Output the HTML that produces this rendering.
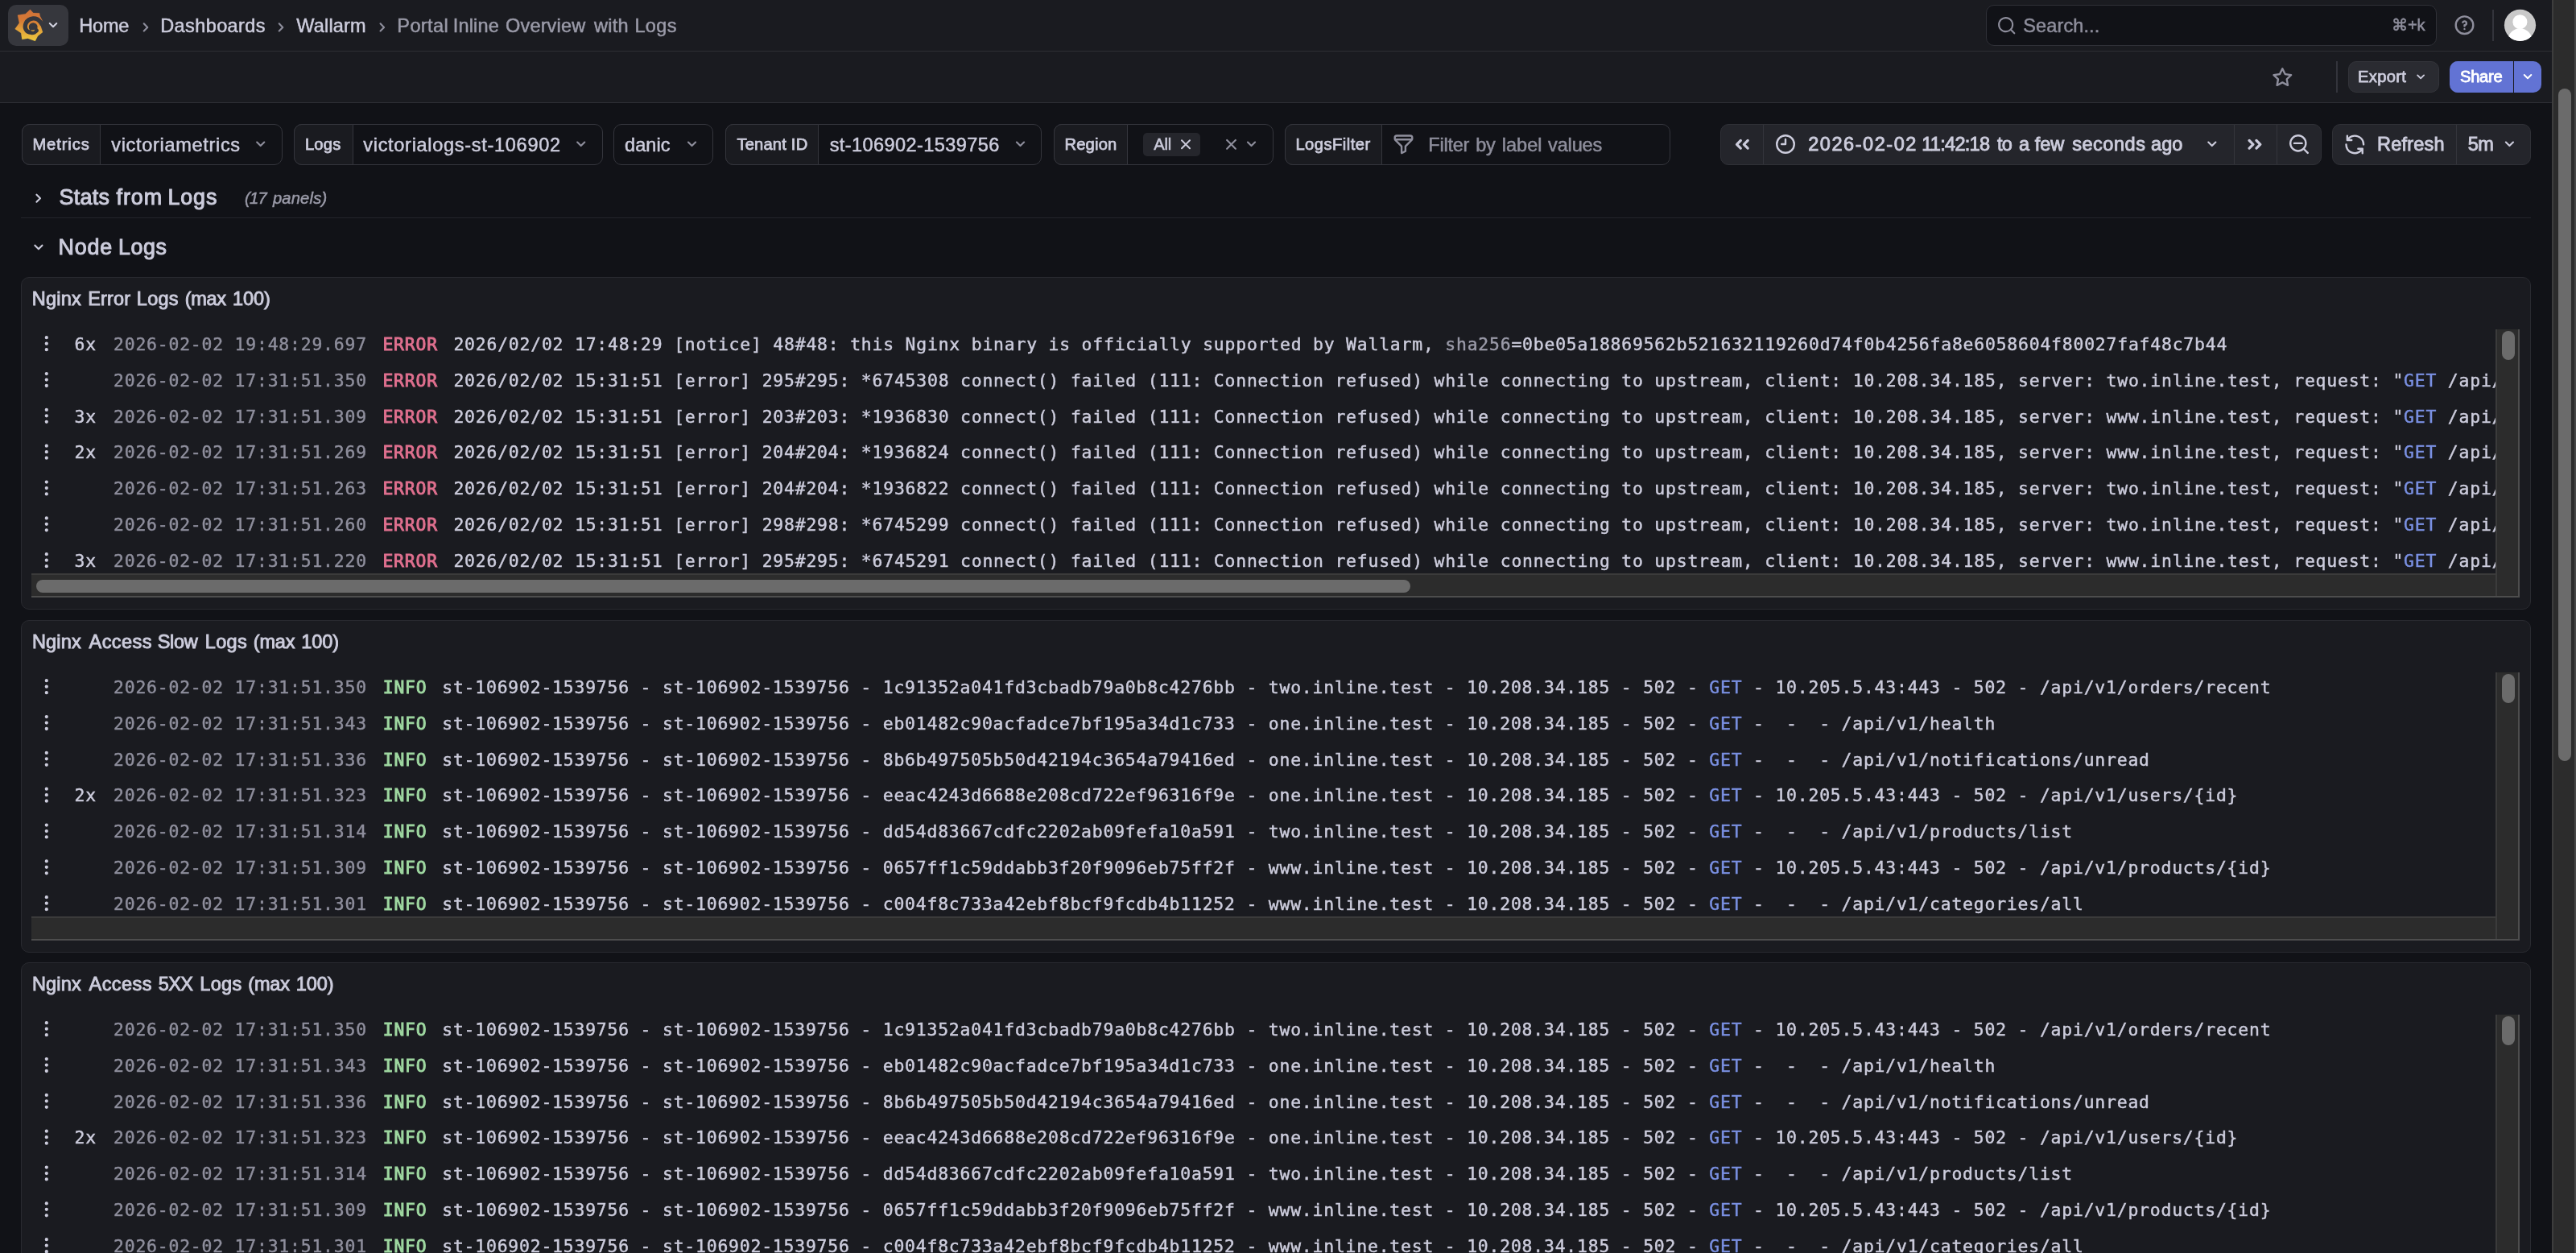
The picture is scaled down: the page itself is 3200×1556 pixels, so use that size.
<!DOCTYPE html>
<html lang="en"><head><meta charset="utf-8"><title>Portal Inline Overview with Logs - Dashboards - Grafana</title>
<style>
html,body{margin:0;padding:0;}
@media (max-width:1700px){html{zoom:.5;}}
body{width:3200px;height:1556px;overflow:hidden;background:#111217;position:relative;font-family:"Liberation Sans", "DejaVu Sans", sans-serif;color:#ccccdc;}
.b{position:absolute;box-sizing:border-box;}
#tx{position:absolute;left:0;top:0;width:3200px;height:1556px;will-change:transform;}
.t{position:absolute;white-space:pre;}
.m{font-family:"DejaVu Sans Mono", "Liberation Mono", monospace;}
svg{position:absolute;overflow:visible;}
</style></head>
<body>
<div class="b" style="left:0px;top:0px;width:3170px;height:128px;background:#1a1b20;"></div>
<div class="b" style="left:0px;top:63px;width:3170px;height:1px;background:#2e2f35;"></div>
<div class="b" style="left:0px;top:127px;width:3170px;height:1px;background:#2e2f35;"></div>
<div class="b" style="left:10px;top:6px;width:75px;height:51px;background:#36373d;border-radius:10px;"></div>
<div class="b" style="left:2467px;top:6px;width:560px;height:51px;background:#111217;border:1.6px solid #2f3037;border-radius:10px;"></div>
<div class="b" style="left:3096px;top:12px;width:2px;height:39px;background:#33343b;"></div>
<div class="b" style="left:2902px;top:76px;width:2px;height:39px;background:#33343b;"></div>
<div class="b" style="left:2917px;top:76px;width:113px;height:39px;background:#2a2b31;border:1px solid #33343a;border-radius:10px;"></div>
<div class="b" style="left:3043px;top:76px;width:114px;height:39px;background:#6273d4;border-radius:10px;"></div>
<div class="b" style="left:3122px;top:76px;width:1px;height:39px;background:#1a1b20;"></div>
<div class="b" style="left:3170px;top:0px;width:30px;height:1556px;background:#2c2c2c;border-left:2px solid #3d3d3d;border-right:2px solid #474747;"></div>
<div class="b" style="left:3178px;top:110px;width:16px;height:835px;background:#6b6b6b;border-radius:8px;"></div>
<div class="b" style="left:27px;top:154px;width:324px;height:51px;background:#111217;border:1.6px solid #34353c;border-radius:10px;"></div>
<div class="b" style="left:27px;top:154px;width:98.3px;height:51px;background:#1a1b20;border:1.6px solid #34353c;border-radius:10px 0 0 10px;"></div>
<div class="b" style="left:365px;top:154px;width:383.6px;height:51px;background:#111217;border:1.6px solid #34353c;border-radius:10px;"></div>
<div class="b" style="left:365px;top:154px;width:73.49999999999999px;height:51px;background:#1a1b20;border:1.6px solid #34353c;border-radius:10px 0 0 10px;"></div>
<div class="b" style="left:762px;top:154px;width:124px;height:51px;background:#111217;border:1.6px solid #34353c;border-radius:10px;"></div>
<div class="b" style="left:901px;top:154px;width:393px;height:51px;background:#111217;border:1.6px solid #34353c;border-radius:10px;"></div>
<div class="b" style="left:901px;top:154px;width:116.3px;height:51px;background:#1a1b20;border:1.6px solid #34353c;border-radius:10px 0 0 10px;"></div>
<div class="b" style="left:1309px;top:154px;width:273px;height:51px;background:#111217;border:1.6px solid #34353c;border-radius:10px;"></div>
<div class="b" style="left:1309px;top:154px;width:91.50000000000004px;height:51px;background:#1a1b20;border:1.6px solid #34353c;border-radius:10px 0 0 10px;"></div>
<div class="b" style="left:1420px;top:165px;width:71px;height:29px;background:#25262c;border-radius:5px;"></div>
<div class="b" style="left:1596px;top:154px;width:478.5999999999999px;height:51px;background:#111217;border:1.6px solid #34353c;border-radius:10px;"></div>
<div class="b" style="left:1596px;top:154px;width:121.20000000000009px;height:51px;background:#1a1b20;border:1.6px solid #34353c;border-radius:10px 0 0 10px;"></div>
<div class="b" style="left:2137px;top:154px;width:747px;height:51px;background:#24252b;border:1px solid #2f3036;border-radius:10px;"></div>
<div class="b" style="left:2189.5px;top:155px;width:1.5px;height:49px;background:#34353c;"></div>
<div class="b" style="left:2774.5px;top:155px;width:1.5px;height:49px;background:#34353c;"></div>
<div class="b" style="left:2827.7px;top:155px;width:1.5px;height:49px;background:#34353c;"></div>
<div class="b" style="left:2897px;top:154px;width:247px;height:51px;background:#24252b;border:1px solid #2f3036;border-radius:10px;"></div>
<div class="b" style="left:3050.5px;top:155px;width:1.5px;height:49px;background:#34353c;"></div>
<div class="b" style="left:26px;top:270px;width:3118px;height:1px;background:#24252b;"></div>
<div class="b" style="left:26px;top:344px;width:3118px;height:413px;background:#1a1b20;border:1.6px solid #292a30;border-radius:10px;"></div>
<div class="b" style="left:39px;top:712px;width:3091px;height:30px;background:#2c2c2c;border-top:2px solid #3b3b3b;border-bottom:2px solid #4d4d4d;"></div>
<div class="b" style="left:45px;top:720px;width:1706.5px;height:16px;background:#6b6b6b;border-radius:8px;"></div>
<div class="b" style="left:3100px;top:409px;width:30px;height:331px;background:#2c2c2c;border-left:2px solid #3b3b3b;border-right:2px solid #4d4d4d;"></div>
<div class="b" style="left:3108px;top:411px;width:16px;height:36px;background:#6b6b6b;border-radius:8px;"></div>
<div class="b" style="left:26px;top:770px;width:3118px;height:413px;background:#1a1b20;border:1.6px solid #292a30;border-radius:10px;"></div>
<div class="b" style="left:39px;top:1138px;width:3091px;height:30px;background:#2c2c2c;border-top:2px solid #3b3b3b;border-bottom:2px solid #4d4d4d;"></div>
<div class="b" style="left:3100px;top:835px;width:30px;height:331px;background:#2c2c2c;border-left:2px solid #3b3b3b;border-right:2px solid #4d4d4d;"></div>
<div class="b" style="left:3108px;top:837px;width:16px;height:36px;background:#6b6b6b;border-radius:8px;"></div>
<div class="b" style="left:26px;top:1195px;width:3118px;height:413px;background:#1a1b20;border:1.6px solid #292a30;border-radius:10px;"></div>
<div class="b" style="left:39px;top:1563px;width:3091px;height:30px;background:#2c2c2c;border-top:2px solid #3b3b3b;border-bottom:2px solid #4d4d4d;"></div>
<div class="b" style="left:3100px;top:1260px;width:30px;height:331px;background:#2c2c2c;border-left:2px solid #3b3b3b;border-right:2px solid #4d4d4d;"></div>
<div class="b" style="left:3108px;top:1262px;width:16px;height:36px;background:#6b6b6b;border-radius:8px;"></div>
<svg width="3200" height="1556" viewBox="0 0 3200 1556" style="left:0;top:0"><path transform="translate(54.00 19.10) scale(1.0000)" fill="#d4d4e2" d="M17,9.17a1,1,0,0,0-1.41,0L12,12.71,8.46,9.17a1,1,0,0,0-1.41,0,1,1,0,0,0,0,1.42l4.24,4.24a1,1,0,0,0,1.42,0L17,10.59A1,1,0,0,0,17,9.17Z"/><path transform="translate(168.20 21.10) scale(1.0667)" fill="#8e8e9c" d="M14.83,11.29,10.59,7.05a1,1,0,0,0-1.42,0,1,1,0,0,0,0,1.41L12.71,12,9.17,15.54a1,1,0,0,0,0,1.41,1,1,0,0,0,.71.29,1,1,0,0,0,.71-.29l4.24-4.24A1,1,0,0,0,14.83,11.29Z"/><path transform="translate(336.20 21.10) scale(1.0667)" fill="#8e8e9c" d="M14.83,11.29,10.59,7.05a1,1,0,0,0-1.42,0,1,1,0,0,0,0,1.41L12.71,12,9.17,15.54a1,1,0,0,0,0,1.41,1,1,0,0,0,.71.29,1,1,0,0,0,.71-.29l4.24-4.24A1,1,0,0,0,14.83,11.29Z"/><path transform="translate(462.00 21.10) scale(1.0667)" fill="#8e8e9c" d="M14.83,11.29,10.59,7.05a1,1,0,0,0-1.42,0,1,1,0,0,0,0,1.41L12.71,12,9.17,15.54a1,1,0,0,0,0,1.41,1,1,0,0,0,.71.29,1,1,0,0,0,.71-.29l4.24-4.24A1,1,0,0,0,14.83,11.29Z"/><path transform="translate(2479.90 18.90) scale(1.0667)" fill="#8e8e9c" d="M21.71,20.29,18,16.61A9,9,0,1,0,16.61,18l3.68,3.68a1,1,0,0,0,1.42,0A1,1,0,0,0,21.71,20.29ZM11,18a7,7,0,1,1,7-7A7,7,0,0,1,11,18Z"/><path transform="translate(3047.10 16.80) scale(1.2000)" fill="#8e8e9c" d="M11.29,15.29a1.58,1.58,0,0,0-.12.15.76.76,0,0,0-.09.18.64.64,0,0,0-.06.18,1.36,1.36,0,0,0,0,.2.84.84,0,0,0,.08.38.9.9,0,0,0,.54.54.94.94,0,0,0,.76,0,.9.9,0,0,0,.54-.54A1,1,0,0,0,13,16a1,1,0,0,0-.29-.71A1,1,0,0,0,11.29,15.29ZM12,2A10,10,0,1,0,22,12,10,10,0,0,0,12,2Zm0,18a8,8,0,1,1,8-8A8,8,0,0,1,12,20ZM12,7A3,3,0,0,0,9.4,8.5a1,1,0,1,0,1.73,1A1,1,0,0,1,12,9a1,1,0,0,1,0,2,1,1,0,0,0-1,1v1a1,1,0,0,0,2,0v-.18A3,3,0,0,0,12,7Z"/><clipPath id="av"><circle cx="3130.5" cy="31.3" r="19.6"/></clipPath><circle cx="3130.5" cy="31.3" r="19.6" fill="#c9c9c9"/><g clip-path="url(#av)" fill="#fff"><circle cx="3130.4" cy="27.2" r="9"/><ellipse cx="3130.4" cy="52" rx="15.5" ry="16.8"/></g><path transform="translate(2820.90 81.20) scale(1.2000)" fill="#8e8e9c" d="M22,9.67A1,1,0,0,0,21.14,9l-5.69-.83L12.9,3a1,1,0,0,0-1.8,0L8.55,8.16,2.86,9a1,1,0,0,0-.81.68,1,1,0,0,0,.25,1l4.13,4-1,5.68A1,1,0,0,0,6.9,21.44L12,18.77l5.1,2.67a.93.93,0,0,0,.46.12,1,1,0,0,0,.59-.19,1,1,0,0,0,.4-1l-1-5.68,4.13-4A1,1,0,0,0,22,9.67Zm-6.15,4a1,1,0,0,0-.29.88l.72,4.2-3.76-2a1.06,1.06,0,0,0-.94,0l-3.76,2,.72-4.2a1,1,0,0,0-.29-.88l-3-3,4.21-.61a1,1,0,0,0,.76-.55L12,5.7l1.88,3.82a1,1,0,0,0,.76.55l4.21.61Z"/><path transform="translate(2995.90 84.20) scale(0.9333)" fill="#ccccdc" d="M17,9.17a1,1,0,0,0-1.41,0L12,12.71,8.46,9.17a1,1,0,0,0-1.41,0,1,1,0,0,0,0,1.42l4.24,4.24a1,1,0,0,0,1.42,0L17,10.59A1,1,0,0,0,17,9.17Z"/><path transform="translate(3128.00 83.10) scale(1.0000)" fill="#ffffff" d="M17,9.17a1,1,0,0,0-1.41,0L12,12.71,8.46,9.17a1,1,0,0,0-1.41,0,1,1,0,0,0,0,1.42l4.24,4.24a1,1,0,0,0,1.42,0L17,10.59A1,1,0,0,0,17,9.17Z"/><path transform="translate(310.90 166.00) scale(1.0667)" fill="#8e8e9c" d="M17,9.17a1,1,0,0,0-1.41,0L12,12.71,8.46,9.17a1,1,0,0,0-1.41,0,1,1,0,0,0,0,1.42l4.24,4.24a1,1,0,0,0,1.42,0L17,10.59A1,1,0,0,0,17,9.17Z"/><path transform="translate(708.90 166.00) scale(1.0667)" fill="#8e8e9c" d="M17,9.17a1,1,0,0,0-1.41,0L12,12.71,8.46,9.17a1,1,0,0,0-1.41,0,1,1,0,0,0,0,1.42l4.24,4.24a1,1,0,0,0,1.42,0L17,10.59A1,1,0,0,0,17,9.17Z"/><path transform="translate(846.70 166.00) scale(1.0667)" fill="#8e8e9c" d="M17,9.17a1,1,0,0,0-1.41,0L12,12.71,8.46,9.17a1,1,0,0,0-1.41,0,1,1,0,0,0,0,1.42l4.24,4.24a1,1,0,0,0,1.42,0L17,10.59A1,1,0,0,0,17,9.17Z"/><path transform="translate(1254.70 166.00) scale(1.0667)" fill="#8e8e9c" d="M17,9.17a1,1,0,0,0-1.41,0L12,12.71,8.46,9.17a1,1,0,0,0-1.41,0,1,1,0,0,0,0,1.42l4.24,4.24a1,1,0,0,0,1.42,0L17,10.59A1,1,0,0,0,17,9.17Z"/><path transform="translate(1461.00 167.30) scale(1.0000)" fill="#ccccdc" d="M13.41,12l4.3-4.29a1,1,0,1,0-1.42-1.42L12,10.59,7.71,6.29A1,1,0,0,0,6.29,7.71L10.59,12l-4.3,4.29a1,1,0,0,0,0,1.42,1,1,0,0,0,1.42,0L12,13.41l4.29,4.3a1,1,0,0,0,1.42,0,1,1,0,0,0,0-1.42Z"/><path transform="translate(1516.70 166.50) scale(1.0667)" fill="#8e8e9c" d="M13.41,12l4.3-4.29a1,1,0,1,0-1.42-1.42L12,10.59,7.71,6.29A1,1,0,0,0,6.29,7.71L10.59,12l-4.3,4.29a1,1,0,0,0,0,1.42,1,1,0,0,0,1.42,0L12,13.41l4.29,4.3a1,1,0,0,0,1.42,0,1,1,0,0,0,0-1.42Z"/><path transform="translate(1541.70 166.00) scale(1.0667)" fill="#8e8e9c" d="M17,9.17a1,1,0,0,0-1.41,0L12,12.71,8.46,9.17a1,1,0,0,0-1.41,0,1,1,0,0,0,0,1.42l4.24,4.24a1,1,0,0,0,1.42,0L17,10.59A1,1,0,0,0,17,9.17Z"/><path transform="translate(1729.10 164.90) scale(1.2000)" fill="#8e8e9c" d="M19,2H5A3,3,0,0,0,2,5V6.17a3,3,0,0,0,.25,1.2l0,.06a2.81,2.81,0,0,0,.59.86L9,14.41V21a1,1,0,0,0,.47.85A1,1,0,0,0,10,22a1,1,0,0,0,.45-.11l4-2A1,1,0,0,0,15,19V14.41l6.12-6.12a2.81,2.81,0,0,0,.59-.86l0-.06A3,3,0,0,0,22,6.17V5A3,3,0,0,0,19,2ZM13.29,13.29A1,1,0,0,0,13,14v4.38l-2,1V14a1,1,0,0,0-.29-.71L5.41,8H18.59ZM20,6H4V5A1,1,0,0,1,5,4H19a1,1,0,0,1,1,1Z"/><path transform="translate(2145.10 160.10) scale(1.6000)" fill="#ccccdc" d="M11.46,8.29a1,1,0,0,0-1.42,0l-3,3a1,1,0,0,0,0,1.42l3,3a1,1,0,0,0,1.42,0,1,1,0,0,0,0-1.42L9.16,12l2.3-2.29A1,1,0,0,0,11.46,8.29Zm3.2,3.71L17,9.71a1,1,0,0,0-1.42-1.42l-3,3a1,1,0,0,0,0,1.42l3,3a1,1,0,0,0,1.42,0,1,1,0,0,0,0-1.42Z"/><path transform="translate(2781.80 160.10) scale(1.6000)" fill="#ccccdc" d="M8.46,8.29A1,1,0,1,0,7,9.71L9.34,12,7,14.29a1,1,0,0,0,0,1.42,1,1,0,0,0,1.42,0l3-3a1,1,0,0,0,0-1.42Zm8.5,3-3-3a1,1,0,0,0-1.42,1.42L14.84,12l-2.3,2.29a1,1,0,0,0,0,1.42,1,1,0,0,0,1.42,0l3-3A1,1,0,0,0,16.96,11.29Z"/><path transform="translate(2203.60 164.60) scale(1.2000)" fill="#ccccdc" d="M12,2A10,10,0,1,0,22,12,10.01114,10.01114,0,0,0,12,2Zm0,18a8,8,0,1,1,8-8A8.00917,8.00917,0,0,1,12,20ZM12,6a.99974.99974,0,0,0-1,1v4H8a1,1,0,0,0,0,2h4a.99974.99974,0,0,0,1-1V7A.99974.99974,0,0,0,12,6Z"/><path transform="translate(2735.00 166.00) scale(1.0667)" fill="#ccccdc" d="M17,9.17a1,1,0,0,0-1.41,0L12,12.71,8.46,9.17a1,1,0,0,0-1.41,0,1,1,0,0,0,0,1.42l4.24,4.24a1,1,0,0,0,1.42,0L17,10.59A1,1,0,0,0,17,9.17Z"/><path transform="translate(2841.60 164.70) scale(1.2000)" fill="#ccccdc" d="M21.71,20.29,18,16.61A9,9,0,1,0,16.61,18l3.68,3.68a1,1,0,0,0,1.42,0A1,1,0,0,0,21.71,20.29ZM11,18a7,7,0,1,1,7-7A7,7,0,0,1,11,18ZM15,10H7a1,1,0,0,0,0,2h8a1,1,0,0,0,0-2Z"/><path transform="translate(2910.90 165.00) scale(1.2000)" fill="#ccccdc" d="M19.91,15.51H15.38a1,1,0,0,0,0,2h2.4A8,8,0,0,1,4,12a1,1,0,0,0-2,0,10,10,0,0,0,16.88,7.23V21a1,1,0,0,0,2,0V16.5A1,1,0,0,0,19.91,15.51ZM12,2A10,10,0,0,0,5.12,4.77V3a1,1,0,0,0-2,0V7.5a1,1,0,0,0,1,1h4.5a1,1,0,0,0,0-2H6.22A8,8,0,0,1,20,12a1,1,0,0,0,2,0A10,10,0,0,0,12,2Z"/><path transform="translate(3104.60 166.00) scale(1.0667)" fill="#ccccdc" d="M17,9.17a1,1,0,0,0-1.41,0L12,12.71,8.46,9.17a1,1,0,0,0-1.41,0,1,1,0,0,0,0,1.42l4.24,4.24a1,1,0,0,0,1.42,0L17,10.59A1,1,0,0,0,17,9.17Z"/><path transform="translate(34.90 233.40) scale(1.0667)" fill="#ccccdc" d="M14.83,11.29,10.59,7.05a1,1,0,0,0-1.42,0,1,1,0,0,0,0,1.41L12.71,12,9.17,15.54a1,1,0,0,0,0,1.41,1,1,0,0,0,.71.29,1,1,0,0,0,.71-.29l4.24-4.24A1,1,0,0,0,14.83,11.29Z"/><path transform="translate(35.10 294.20) scale(1.0667)" fill="#ccccdc" d="M17,9.17a1,1,0,0,0-1.41,0L12,12.71,8.46,9.17a1,1,0,0,0-1.41,0,1,1,0,0,0,0,1.42l4.24,4.24a1,1,0,0,0,1.42,0L17,10.59A1,1,0,0,0,17,9.17Z"/><path transform="translate(45.00 413.90) scale(1.0667)" fill="#ccccdc" d="M12,7a2,2,0,1,0-2-2A2,2,0,0,0,12,7Zm0,10a2,2,0,1,0,2,2A2,2,0,0,0,12,17Zm0-7a2,2,0,1,0,2,2A2,2,0,0,0,12,10Z"/><path transform="translate(45.00 458.73) scale(1.0667)" fill="#ccccdc" d="M12,7a2,2,0,1,0-2-2A2,2,0,0,0,12,7Zm0,10a2,2,0,1,0,2,2A2,2,0,0,0,12,17Zm0-7a2,2,0,1,0,2,2A2,2,0,0,0,12,10Z"/><path transform="translate(45.00 503.56) scale(1.0667)" fill="#ccccdc" d="M12,7a2,2,0,1,0-2-2A2,2,0,0,0,12,7Zm0,10a2,2,0,1,0,2,2A2,2,0,0,0,12,17Zm0-7a2,2,0,1,0,2,2A2,2,0,0,0,12,10Z"/><path transform="translate(45.00 548.39) scale(1.0667)" fill="#ccccdc" d="M12,7a2,2,0,1,0-2-2A2,2,0,0,0,12,7Zm0,10a2,2,0,1,0,2,2A2,2,0,0,0,12,17Zm0-7a2,2,0,1,0,2,2A2,2,0,0,0,12,10Z"/><path transform="translate(45.00 593.22) scale(1.0667)" fill="#ccccdc" d="M12,7a2,2,0,1,0-2-2A2,2,0,0,0,12,7Zm0,10a2,2,0,1,0,2,2A2,2,0,0,0,12,17Zm0-7a2,2,0,1,0,2,2A2,2,0,0,0,12,10Z"/><path transform="translate(45.00 638.05) scale(1.0667)" fill="#ccccdc" d="M12,7a2,2,0,1,0-2-2A2,2,0,0,0,12,7Zm0,10a2,2,0,1,0,2,2A2,2,0,0,0,12,17Zm0-7a2,2,0,1,0,2,2A2,2,0,0,0,12,10Z"/><path transform="translate(45.00 682.88) scale(1.0667)" fill="#ccccdc" d="M12,7a2,2,0,1,0-2-2A2,2,0,0,0,12,7Zm0,10a2,2,0,1,0,2,2A2,2,0,0,0,12,17Zm0-7a2,2,0,1,0,2,2A2,2,0,0,0,12,10Z"/><path transform="translate(45.00 839.90) scale(1.0667)" fill="#ccccdc" d="M12,7a2,2,0,1,0-2-2A2,2,0,0,0,12,7Zm0,10a2,2,0,1,0,2,2A2,2,0,0,0,12,17Zm0-7a2,2,0,1,0,2,2A2,2,0,0,0,12,10Z"/><path transform="translate(45.00 884.73) scale(1.0667)" fill="#ccccdc" d="M12,7a2,2,0,1,0-2-2A2,2,0,0,0,12,7Zm0,10a2,2,0,1,0,2,2A2,2,0,0,0,12,17Zm0-7a2,2,0,1,0,2,2A2,2,0,0,0,12,10Z"/><path transform="translate(45.00 929.56) scale(1.0667)" fill="#ccccdc" d="M12,7a2,2,0,1,0-2-2A2,2,0,0,0,12,7Zm0,10a2,2,0,1,0,2,2A2,2,0,0,0,12,17Zm0-7a2,2,0,1,0,2,2A2,2,0,0,0,12,10Z"/><path transform="translate(45.00 974.39) scale(1.0667)" fill="#ccccdc" d="M12,7a2,2,0,1,0-2-2A2,2,0,0,0,12,7Zm0,10a2,2,0,1,0,2,2A2,2,0,0,0,12,17Zm0-7a2,2,0,1,0,2,2A2,2,0,0,0,12,10Z"/><path transform="translate(45.00 1019.22) scale(1.0667)" fill="#ccccdc" d="M12,7a2,2,0,1,0-2-2A2,2,0,0,0,12,7Zm0,10a2,2,0,1,0,2,2A2,2,0,0,0,12,17Zm0-7a2,2,0,1,0,2,2A2,2,0,0,0,12,10Z"/><path transform="translate(45.00 1064.05) scale(1.0667)" fill="#ccccdc" d="M12,7a2,2,0,1,0-2-2A2,2,0,0,0,12,7Zm0,10a2,2,0,1,0,2,2A2,2,0,0,0,12,17Zm0-7a2,2,0,1,0,2,2A2,2,0,0,0,12,10Z"/><path transform="translate(45.00 1108.88) scale(1.0667)" fill="#ccccdc" d="M12,7a2,2,0,1,0-2-2A2,2,0,0,0,12,7Zm0,10a2,2,0,1,0,2,2A2,2,0,0,0,12,17Zm0-7a2,2,0,1,0,2,2A2,2,0,0,0,12,10Z"/><path transform="translate(45.00 1264.90) scale(1.0667)" fill="#ccccdc" d="M12,7a2,2,0,1,0-2-2A2,2,0,0,0,12,7Zm0,10a2,2,0,1,0,2,2A2,2,0,0,0,12,17Zm0-7a2,2,0,1,0,2,2A2,2,0,0,0,12,10Z"/><path transform="translate(45.00 1309.73) scale(1.0667)" fill="#ccccdc" d="M12,7a2,2,0,1,0-2-2A2,2,0,0,0,12,7Zm0,10a2,2,0,1,0,2,2A2,2,0,0,0,12,17Zm0-7a2,2,0,1,0,2,2A2,2,0,0,0,12,10Z"/><path transform="translate(45.00 1354.56) scale(1.0667)" fill="#ccccdc" d="M12,7a2,2,0,1,0-2-2A2,2,0,0,0,12,7Zm0,10a2,2,0,1,0,2,2A2,2,0,0,0,12,17Zm0-7a2,2,0,1,0,2,2A2,2,0,0,0,12,10Z"/><path transform="translate(45.00 1399.39) scale(1.0667)" fill="#ccccdc" d="M12,7a2,2,0,1,0-2-2A2,2,0,0,0,12,7Zm0,10a2,2,0,1,0,2,2A2,2,0,0,0,12,17Zm0-7a2,2,0,1,0,2,2A2,2,0,0,0,12,10Z"/><path transform="translate(45.00 1444.22) scale(1.0667)" fill="#ccccdc" d="M12,7a2,2,0,1,0-2-2A2,2,0,0,0,12,7Zm0,10a2,2,0,1,0,2,2A2,2,0,0,0,12,17Zm0-7a2,2,0,1,0,2,2A2,2,0,0,0,12,10Z"/><path transform="translate(45.00 1489.05) scale(1.0667)" fill="#ccccdc" d="M12,7a2,2,0,1,0-2-2A2,2,0,0,0,12,7Zm0,10a2,2,0,1,0,2,2A2,2,0,0,0,12,17Zm0-7a2,2,0,1,0,2,2A2,2,0,0,0,12,10Z"/><path transform="translate(45.00 1533.88) scale(1.0667)" fill="#ccccdc" d="M12,7a2,2,0,1,0-2-2A2,2,0,0,0,12,7Zm0,10a2,2,0,1,0,2,2A2,2,0,0,0,12,17Zm0-7a2,2,0,1,0,2,2A2,2,0,0,0,12,10Z"/><defs><linearGradient id="gg" gradientUnits="userSpaceOnUse" x1="0" y1="12" x2="0" y2="51"><stop offset="0" stop-color="#cf7139"/><stop offset="0.35" stop-color="#d67a35"/><stop offset="0.62" stop-color="#e19f3a"/><stop offset="1" stop-color="#ecc83d"/></linearGradient></defs><polygon points="37.49,11.85 41.34,16.00 49.05,16.26 49.78,20.11 52.17,24.51 53.63,30.02 51.98,30.39 50.88,33.32 53.08,39.93 47.03,44.70 43.72,50.94 34.55,47.63 27.39,48.92 26.11,41.03 18.59,35.89 23.91,28.55 21.89,18.83 31.61,17.17" fill="url(#gg)" stroke="url(#gg)" stroke-width="0.2" stroke-linejoin="round"/><circle cx="41.2" cy="33.6" r="5.4" fill="#36373d"/><path d="M45.19 37.91C44.76 38.24 43.66 39.50 42.62 39.93C41.58 40.35 40.30 40.60 38.95 40.48C37.61 40.35 35.71 39.90 34.55 39.19C33.39 38.49 32.53 37.30 31.98 36.26C31.43 35.22 31.19 34.24 31.25 32.95C31.31 31.67 31.61 29.93 32.35 28.55C33.08 27.17 34.18 25.65 35.65 24.70C37.12 23.75 39.38 23.02 41.16 22.86C42.93 22.71 44.83 23.08 46.29 23.78C47.76 24.48 48.98 25.98 49.96 27.08C50.94 28.18 51.80 29.83 52.17 30.39" stroke="#36373d" stroke-width="5.3" fill="none" stroke-linecap="round"/><path d="M39.32 37.91C39.63 37.95 40.67 38.23 41.16 38.17C41.65 38.10 42.07 37.65 42.26 37.54" stroke="#e3a63a" stroke-width="1.3" fill="none" stroke-linecap="round"/></svg>
<div id="tx">
<div class="t" style="left:98.25px;top:15.00px;font-size:23.52px;line-height:35px;letter-spacing:-0.216px;-webkit-text-stroke-width:0.5px;">Home</div>
<div class="t" style="left:199.25px;top:15.00px;font-size:23.52px;line-height:35px;letter-spacing:0.384px;-webkit-text-stroke-width:0.5px;">Dashboards</div>
<div class="t" style="left:368.25px;top:15.00px;font-size:23.52px;line-height:35px;letter-spacing:0.174px;-webkit-text-stroke-width:0.5px;">Wallarm</div>
<div class="t" style="left:493.35px;top:15.00px;font-size:23.52px;line-height:35px;color:#9a9aa8;letter-spacing:0.379px;-webkit-text-stroke-width:0.5px;">Portal</div>
<div class="t" style="left:562.65px;top:15.00px;font-size:23.52px;line-height:35px;color:#9a9aa8;letter-spacing:0.212px;-webkit-text-stroke-width:0.5px;">Inline</div>
<div class="t" style="left:628.05px;top:15.00px;font-size:23.52px;line-height:35px;color:#9a9aa8;letter-spacing:0.154px;-webkit-text-stroke-width:0.5px;">Overview</div>
<div class="t" style="left:738.05px;top:15.00px;font-size:23.52px;line-height:35px;color:#9a9aa8;letter-spacing:0.253px;-webkit-text-stroke-width:0.5px;">with</div>
<div class="t" style="left:788.45px;top:15.00px;font-size:23.52px;line-height:35px;color:#9a9aa8;letter-spacing:0.355px;-webkit-text-stroke-width:0.5px;">Logs</div>
<div class="t" style="left:2513.25px;top:15.00px;font-size:23.52px;line-height:35px;color:#8e8e9c;letter-spacing:0.116px;-webkit-text-stroke-width:0.5px;">Search...</div>
<div class="t" style="left:2971.05px;top:16.40px;font-size:20.16px;line-height:30px;color:#8e8e9c;letter-spacing:-0.214px;-webkit-text-stroke-width:0.5px;">⌘+k</div>
<div class="t" style="left:2928.97px;top:79.80px;font-size:20.16px;line-height:30px;letter-spacing:0.339px;-webkit-text-stroke-width:0.75px;">Export</div>
<div class="t" style="left:3056.03px;top:79.90px;font-size:20.16px;line-height:30px;color:#ffffff;letter-spacing:-0.282px;-webkit-text-stroke-width:0.85px;">Share</div>
<div class="t" style="left:40.38px;top:164.20px;font-size:20.16px;line-height:30px;letter-spacing:0.897px;-webkit-text-stroke-width:0.75px;">Metrics</div>
<div class="t" style="left:138.25px;top:162.90px;font-size:23.52px;line-height:35px;letter-spacing:0.686px;-webkit-text-stroke-width:0.5px;">victoriametrics</div>
<div class="t" style="left:378.88px;top:164.20px;font-size:20.16px;line-height:30px;letter-spacing:0.273px;-webkit-text-stroke-width:0.75px;">Logs</div>
<div class="t" style="left:451.25px;top:162.90px;font-size:23.52px;line-height:35px;letter-spacing:0.702px;-webkit-text-stroke-width:0.5px;">victorialogs-st-106902</div>
<div class="t" style="left:776.05px;top:162.90px;font-size:23.52px;line-height:35px;letter-spacing:0.060px;-webkit-text-stroke-width:0.5px;">danic</div>
<div class="t" style="left:915.38px;top:164.20px;font-size:20.16px;line-height:30px;letter-spacing:0.192px;-webkit-text-stroke-width:0.75px;">Tenant ID</div>
<div class="t" style="left:1030.65px;top:162.90px;font-size:23.52px;line-height:35px;letter-spacing:0.413px;-webkit-text-stroke-width:0.5px;">st-106902-1539756</div>
<div class="t" style="left:1322.38px;top:164.20px;font-size:20.16px;line-height:30px;letter-spacing:0.217px;-webkit-text-stroke-width:0.75px;">Region</div>
<div class="t" style="left:1433.25px;top:164.00px;font-size:20.16px;line-height:30px;letter-spacing:-0.211px;-webkit-text-stroke-width:0.5px;">All</div>
<div class="t" style="left:1609.38px;top:164.20px;font-size:20.16px;line-height:30px;letter-spacing:0.474px;-webkit-text-stroke-width:0.75px;">LogsFilter</div>
<div class="t" style="left:1774.35px;top:162.90px;font-size:23.52px;line-height:35px;color:#8e8e9c;letter-spacing:-0.245px;-webkit-text-stroke-width:0.5px;">Filter</div>
<div class="t" style="left:1833.15px;top:162.90px;font-size:23.52px;line-height:35px;color:#8e8e9c;letter-spacing:-0.278px;-webkit-text-stroke-width:0.5px;">by</div>
<div class="t" style="left:1865.75px;top:162.90px;font-size:23.52px;line-height:35px;color:#8e8e9c;letter-spacing:0.010px;-webkit-text-stroke-width:0.5px;">label</div>
<div class="t" style="left:1923.05px;top:162.90px;font-size:23.52px;line-height:35px;color:#8e8e9c;letter-spacing:-0.143px;-webkit-text-stroke-width:0.5px;">values</div>
<div class="t" style="left:2246.15px;top:161.80px;font-size:23.52px;line-height:35px;letter-spacing:1.554px;-webkit-text-stroke-width:0.9px;">2026-02-02</div>
<div class="t" style="left:2387.19px;top:161.80px;font-size:23.52px;line-height:35px;letter-spacing:-0.700px;-webkit-text-stroke-width:0.9px;">11:42:18</div>
<div class="t" style="left:2481.03px;top:161.80px;font-size:23.52px;line-height:35px;letter-spacing:-0.700px;-webkit-text-stroke-width:0.9px;">to</div>
<div class="t" style="left:2507.95px;top:161.80px;font-size:23.52px;line-height:35px;-webkit-text-stroke-width:0.9px;">a</div>
<div class="t" style="left:2527.65px;top:161.80px;font-size:23.52px;line-height:35px;letter-spacing:-0.006px;-webkit-text-stroke-width:0.9px;">few</div>
<div class="t" style="left:2574.15px;top:161.80px;font-size:23.52px;line-height:35px;letter-spacing:0.529px;-webkit-text-stroke-width:0.9px;">seconds</div>
<div class="t" style="left:2672.05px;top:161.80px;font-size:23.52px;line-height:35px;letter-spacing:0.072px;-webkit-text-stroke-width:0.9px;">ago</div>
<div class="t" style="left:2953.05px;top:162.00px;font-size:23.52px;line-height:35px;letter-spacing:0.207px;-webkit-text-stroke-width:0.9px;">Refresh</div>
<div class="t" style="left:3065.81px;top:162.00px;font-size:23.52px;line-height:35px;letter-spacing:-0.700px;-webkit-text-stroke-width:0.9px;">5m</div>
<div class="t" style="left:73.60px;top:224.70px;font-size:26.88px;line-height:40px;letter-spacing:0.249px;-webkit-text-stroke-width:1.0px;">Stats</div>
<div class="t" style="left:144.50px;top:224.70px;font-size:26.88px;line-height:40px;letter-spacing:0.979px;-webkit-text-stroke-width:1.0px;">from</div>
<div class="t" style="left:208.50px;top:224.70px;font-size:26.88px;line-height:40px;letter-spacing:0.853px;-webkit-text-stroke-width:1.0px;">Logs</div>
<div class="t" style="left:303.89px;top:231.00px;font-size:20.16px;line-height:30px;font-style:italic;color:#9a9aa8;letter-spacing:-0.700px;-webkit-text-stroke-width:0.5px;">(17</div>
<div class="t" style="left:338.95px;top:231.00px;font-size:20.16px;line-height:30px;font-style:italic;color:#9a9aa8;letter-spacing:0.184px;-webkit-text-stroke-width:0.5px;">panels)</div>
<div class="t" style="left:72.60px;top:286.80px;font-size:26.88px;line-height:40px;letter-spacing:0.800px;-webkit-text-stroke-width:1.0px;">Node</div>
<div class="t" style="left:147.00px;top:286.80px;font-size:26.88px;line-height:40px;letter-spacing:0.587px;-webkit-text-stroke-width:1.0px;">Logs</div>
<div class="t" style="left:39.65px;top:354.30px;font-size:23.52px;line-height:35px;letter-spacing:0.259px;-webkit-text-stroke-width:0.9px;">Nginx</div>
<div class="t" style="left:109.15px;top:354.30px;font-size:23.52px;line-height:35px;letter-spacing:0.169px;-webkit-text-stroke-width:0.9px;">Error</div>
<div class="t" style="left:169.85px;top:354.30px;font-size:23.52px;line-height:35px;letter-spacing:0.255px;-webkit-text-stroke-width:0.9px;">Logs</div>
<div class="t" style="left:229.85px;top:354.30px;font-size:23.52px;line-height:35px;letter-spacing:-0.333px;-webkit-text-stroke-width:0.9px;">(max</div>
<div class="t" style="left:289.05px;top:354.30px;font-size:23.52px;line-height:35px;letter-spacing:-0.112px;-webkit-text-stroke-width:0.9px;">100)</div>
<div class="t m" style="left:92.62px;top:412.00px;font-size:21.4px;line-height:32px;letter-spacing:0.809px;-webkit-text-stroke-width:0.45px;">6x</div>
<div class="t m" style="left:141.03px;top:412.00px;font-size:21.4px;line-height:32px;color:#8e8e9c;letter-spacing:0.809px;-webkit-text-stroke-width:0.45px;">2026-02-02 19:48:29.697</div>
<div class="t m" style="left:475.45px;top:412.00px;font-size:21.4px;line-height:32px;color:#e0708f;letter-spacing:0.809px;-webkit-text-stroke-width:0.9px;">ERROR</div>
<div class="t m" style="left:563.43px;top:412.00px;font-size:21.4px;line-height:32px;letter-spacing:0.809px;-webkit-text-stroke-width:0.45px;width:2537.0px;overflow:hidden;">2026/02/02 17:48:29 [notice] 48#48: this Nginx binary is officially supported by Wallarm, <span style="color:#9a9aa8">sha256</span>=0be05a18869562b521632119260d74f0b4256fa8e6058604f80027faf48c7b44</div>
<div class="t m" style="left:141.03px;top:456.83px;font-size:21.4px;line-height:32px;color:#8e8e9c;letter-spacing:0.809px;-webkit-text-stroke-width:0.45px;">2026-02-02 17:31:51.350</div>
<div class="t m" style="left:475.45px;top:456.83px;font-size:21.4px;line-height:32px;color:#e0708f;letter-spacing:0.809px;-webkit-text-stroke-width:0.9px;">ERROR</div>
<div class="t m" style="left:563.43px;top:456.83px;font-size:21.4px;line-height:32px;letter-spacing:0.809px;-webkit-text-stroke-width:0.45px;width:2537.0px;overflow:hidden;">2026/02/02 15:31:51 [error] 295#295: *6745308 connect() failed (111: Connection refused) while connecting to upstream, client: 10.208.34.185, server: two.inline.test, request: "<span style="color:#7a90e2">GET</span> /api/v1/orders/recent HTTP/1.1"</div>
<div class="t m" style="left:92.62px;top:501.66px;font-size:21.4px;line-height:32px;letter-spacing:0.809px;-webkit-text-stroke-width:0.45px;">3x</div>
<div class="t m" style="left:141.03px;top:501.66px;font-size:21.4px;line-height:32px;color:#8e8e9c;letter-spacing:0.809px;-webkit-text-stroke-width:0.45px;">2026-02-02 17:31:51.309</div>
<div class="t m" style="left:475.45px;top:501.66px;font-size:21.4px;line-height:32px;color:#e0708f;letter-spacing:0.809px;-webkit-text-stroke-width:0.9px;">ERROR</div>
<div class="t m" style="left:563.43px;top:501.66px;font-size:21.4px;line-height:32px;letter-spacing:0.809px;-webkit-text-stroke-width:0.45px;width:2537.0px;overflow:hidden;">2026/02/02 15:31:51 [error] 203#203: *1936830 connect() failed (111: Connection refused) while connecting to upstream, client: 10.208.34.185, server: www.inline.test, request: "<span style="color:#7a90e2">GET</span> /api/v1/orders/recent HTTP/1.1"</div>
<div class="t m" style="left:92.62px;top:546.49px;font-size:21.4px;line-height:32px;letter-spacing:0.809px;-webkit-text-stroke-width:0.45px;">2x</div>
<div class="t m" style="left:141.03px;top:546.49px;font-size:21.4px;line-height:32px;color:#8e8e9c;letter-spacing:0.809px;-webkit-text-stroke-width:0.45px;">2026-02-02 17:31:51.269</div>
<div class="t m" style="left:475.45px;top:546.49px;font-size:21.4px;line-height:32px;color:#e0708f;letter-spacing:0.809px;-webkit-text-stroke-width:0.9px;">ERROR</div>
<div class="t m" style="left:563.43px;top:546.49px;font-size:21.4px;line-height:32px;letter-spacing:0.809px;-webkit-text-stroke-width:0.45px;width:2537.0px;overflow:hidden;">2026/02/02 15:31:51 [error] 204#204: *1936824 connect() failed (111: Connection refused) while connecting to upstream, client: 10.208.34.185, server: www.inline.test, request: "<span style="color:#7a90e2">GET</span> /api/v1/orders/recent HTTP/1.1"</div>
<div class="t m" style="left:141.03px;top:591.32px;font-size:21.4px;line-height:32px;color:#8e8e9c;letter-spacing:0.809px;-webkit-text-stroke-width:0.45px;">2026-02-02 17:31:51.263</div>
<div class="t m" style="left:475.45px;top:591.32px;font-size:21.4px;line-height:32px;color:#e0708f;letter-spacing:0.809px;-webkit-text-stroke-width:0.9px;">ERROR</div>
<div class="t m" style="left:563.43px;top:591.32px;font-size:21.4px;line-height:32px;letter-spacing:0.809px;-webkit-text-stroke-width:0.45px;width:2537.0px;overflow:hidden;">2026/02/02 15:31:51 [error] 204#204: *1936822 connect() failed (111: Connection refused) while connecting to upstream, client: 10.208.34.185, server: two.inline.test, request: "<span style="color:#7a90e2">GET</span> /api/v1/orders/recent HTTP/1.1"</div>
<div class="t m" style="left:141.03px;top:636.15px;font-size:21.4px;line-height:32px;color:#8e8e9c;letter-spacing:0.809px;-webkit-text-stroke-width:0.45px;">2026-02-02 17:31:51.260</div>
<div class="t m" style="left:475.45px;top:636.15px;font-size:21.4px;line-height:32px;color:#e0708f;letter-spacing:0.809px;-webkit-text-stroke-width:0.9px;">ERROR</div>
<div class="t m" style="left:563.43px;top:636.15px;font-size:21.4px;line-height:32px;letter-spacing:0.809px;-webkit-text-stroke-width:0.45px;width:2537.0px;overflow:hidden;">2026/02/02 15:31:51 [error] 298#298: *6745299 connect() failed (111: Connection refused) while connecting to upstream, client: 10.208.34.185, server: two.inline.test, request: "<span style="color:#7a90e2">GET</span> /api/v1/orders/recent HTTP/1.1"</div>
<div class="t m" style="left:92.62px;top:680.98px;font-size:21.4px;line-height:32px;letter-spacing:0.809px;-webkit-text-stroke-width:0.45px;">3x</div>
<div class="t m" style="left:141.03px;top:680.98px;font-size:21.4px;line-height:32px;color:#8e8e9c;letter-spacing:0.809px;-webkit-text-stroke-width:0.45px;">2026-02-02 17:31:51.220</div>
<div class="t m" style="left:475.45px;top:680.98px;font-size:21.4px;line-height:32px;color:#e0708f;letter-spacing:0.809px;-webkit-text-stroke-width:0.9px;">ERROR</div>
<div class="t m" style="left:563.43px;top:680.98px;font-size:21.4px;line-height:32px;letter-spacing:0.809px;-webkit-text-stroke-width:0.45px;width:2537.0px;overflow:hidden;">2026/02/02 15:31:51 [error] 295#295: *6745291 connect() failed (111: Connection refused) while connecting to upstream, client: 10.208.34.185, server: www.inline.test, request: "<span style="color:#7a90e2">GET</span> /api/v1/orders/recent HTTP/1.1"</div>
<div class="t" style="left:39.95px;top:780.30px;font-size:23.52px;line-height:35px;letter-spacing:0.184px;-webkit-text-stroke-width:0.9px;">Nginx</div>
<div class="t" style="left:110.55px;top:780.30px;font-size:23.52px;line-height:35px;letter-spacing:0.433px;-webkit-text-stroke-width:0.9px;">Access</div>
<div class="t" style="left:195.75px;top:780.30px;font-size:23.52px;line-height:35px;letter-spacing:-0.362px;-webkit-text-stroke-width:0.9px;">Slow</div>
<div class="t" style="left:254.75px;top:780.30px;font-size:23.52px;line-height:35px;letter-spacing:0.355px;-webkit-text-stroke-width:0.9px;">Logs</div>
<div class="t" style="left:314.85px;top:780.30px;font-size:23.52px;line-height:35px;letter-spacing:-0.233px;-webkit-text-stroke-width:0.9px;">(max</div>
<div class="t" style="left:374.25px;top:780.30px;font-size:23.52px;line-height:35px;letter-spacing:-0.078px;-webkit-text-stroke-width:0.9px;">100)</div>
<div class="t m" style="left:141.03px;top:838.00px;font-size:21.4px;line-height:32px;color:#8e8e9c;letter-spacing:0.809px;-webkit-text-stroke-width:0.45px;">2026-02-02 17:31:51.350</div>
<div class="t m" style="left:475.75px;top:838.00px;font-size:21.4px;line-height:32px;color:#9fd8a1;letter-spacing:0.809px;-webkit-text-stroke-width:0.9px;">INFO</div>
<div class="t m" style="left:549.23px;top:838.00px;font-size:21.4px;line-height:32px;letter-spacing:0.809px;-webkit-text-stroke-width:0.45px;width:2550.2px;overflow:hidden;">st-106902-1539756 - st-106902-1539756 - 1c91352a041fd3cbadb79a0b8c4276bb - two.inline.test - 10.208.34.185 - 502 - <span style="color:#7a90e2">GET</span> - 10.205.5.43:443 - 502 - /api/v1/orders/recent</div>
<div class="t m" style="left:141.03px;top:882.83px;font-size:21.4px;line-height:32px;color:#8e8e9c;letter-spacing:0.809px;-webkit-text-stroke-width:0.45px;">2026-02-02 17:31:51.343</div>
<div class="t m" style="left:475.75px;top:882.83px;font-size:21.4px;line-height:32px;color:#9fd8a1;letter-spacing:0.809px;-webkit-text-stroke-width:0.9px;">INFO</div>
<div class="t m" style="left:549.23px;top:882.83px;font-size:21.4px;line-height:32px;letter-spacing:0.809px;-webkit-text-stroke-width:0.45px;width:2550.2px;overflow:hidden;">st-106902-1539756 - st-106902-1539756 - eb01482c90acfadce7bf195a34d1c733 - one.inline.test - 10.208.34.185 - 502 - <span style="color:#7a90e2">GET</span> -  -  - /api/v1/health</div>
<div class="t m" style="left:141.03px;top:927.66px;font-size:21.4px;line-height:32px;color:#8e8e9c;letter-spacing:0.809px;-webkit-text-stroke-width:0.45px;">2026-02-02 17:31:51.336</div>
<div class="t m" style="left:475.75px;top:927.66px;font-size:21.4px;line-height:32px;color:#9fd8a1;letter-spacing:0.809px;-webkit-text-stroke-width:0.9px;">INFO</div>
<div class="t m" style="left:549.23px;top:927.66px;font-size:21.4px;line-height:32px;letter-spacing:0.809px;-webkit-text-stroke-width:0.45px;width:2550.2px;overflow:hidden;">st-106902-1539756 - st-106902-1539756 - 8b6b497505b50d42194c3654a79416ed - one.inline.test - 10.208.34.185 - 502 - <span style="color:#7a90e2">GET</span> -  -  - /api/v1/notifications/unread</div>
<div class="t m" style="left:92.62px;top:972.49px;font-size:21.4px;line-height:32px;letter-spacing:0.809px;-webkit-text-stroke-width:0.45px;">2x</div>
<div class="t m" style="left:141.03px;top:972.49px;font-size:21.4px;line-height:32px;color:#8e8e9c;letter-spacing:0.809px;-webkit-text-stroke-width:0.45px;">2026-02-02 17:31:51.323</div>
<div class="t m" style="left:475.75px;top:972.49px;font-size:21.4px;line-height:32px;color:#9fd8a1;letter-spacing:0.809px;-webkit-text-stroke-width:0.9px;">INFO</div>
<div class="t m" style="left:549.23px;top:972.49px;font-size:21.4px;line-height:32px;letter-spacing:0.809px;-webkit-text-stroke-width:0.45px;width:2550.2px;overflow:hidden;">st-106902-1539756 - st-106902-1539756 - eeac4243d6688e208cd722ef96316f9e - one.inline.test - 10.208.34.185 - 502 - <span style="color:#7a90e2">GET</span> - 10.205.5.43:443 - 502 - /api/v1/users/{id}</div>
<div class="t m" style="left:141.03px;top:1017.32px;font-size:21.4px;line-height:32px;color:#8e8e9c;letter-spacing:0.809px;-webkit-text-stroke-width:0.45px;">2026-02-02 17:31:51.314</div>
<div class="t m" style="left:475.75px;top:1017.32px;font-size:21.4px;line-height:32px;color:#9fd8a1;letter-spacing:0.809px;-webkit-text-stroke-width:0.9px;">INFO</div>
<div class="t m" style="left:549.23px;top:1017.32px;font-size:21.4px;line-height:32px;letter-spacing:0.809px;-webkit-text-stroke-width:0.45px;width:2550.2px;overflow:hidden;">st-106902-1539756 - st-106902-1539756 - dd54d83667cdfc2202ab09fefa10a591 - two.inline.test - 10.208.34.185 - 502 - <span style="color:#7a90e2">GET</span> -  -  - /api/v1/products/list</div>
<div class="t m" style="left:141.03px;top:1062.15px;font-size:21.4px;line-height:32px;color:#8e8e9c;letter-spacing:0.809px;-webkit-text-stroke-width:0.45px;">2026-02-02 17:31:51.309</div>
<div class="t m" style="left:475.75px;top:1062.15px;font-size:21.4px;line-height:32px;color:#9fd8a1;letter-spacing:0.809px;-webkit-text-stroke-width:0.9px;">INFO</div>
<div class="t m" style="left:549.23px;top:1062.15px;font-size:21.4px;line-height:32px;letter-spacing:0.809px;-webkit-text-stroke-width:0.45px;width:2550.2px;overflow:hidden;">st-106902-1539756 - st-106902-1539756 - 0657ff1c59ddabb3f20f9096eb75ff2f - www.inline.test - 10.208.34.185 - 502 - <span style="color:#7a90e2">GET</span> - 10.205.5.43:443 - 502 - /api/v1/products/{id}</div>
<div class="t m" style="left:141.03px;top:1106.98px;font-size:21.4px;line-height:32px;color:#8e8e9c;letter-spacing:0.809px;-webkit-text-stroke-width:0.45px;">2026-02-02 17:31:51.301</div>
<div class="t m" style="left:475.75px;top:1106.98px;font-size:21.4px;line-height:32px;color:#9fd8a1;letter-spacing:0.809px;-webkit-text-stroke-width:0.9px;">INFO</div>
<div class="t m" style="left:549.23px;top:1106.98px;font-size:21.4px;line-height:32px;letter-spacing:0.809px;-webkit-text-stroke-width:0.45px;width:2550.2px;overflow:hidden;">st-106902-1539756 - st-106902-1539756 - c004f8c733a42ebf8bcf9fcdb4b11252 - www.inline.test - 10.208.34.185 - 502 - <span style="color:#7a90e2">GET</span> -  -  - /api/v1/categories/all</div>
<div class="t" style="left:39.95px;top:1205.30px;font-size:23.52px;line-height:35px;letter-spacing:0.184px;-webkit-text-stroke-width:0.9px;">Nginx</div>
<div class="t" style="left:110.55px;top:1205.30px;font-size:23.52px;line-height:35px;letter-spacing:0.433px;-webkit-text-stroke-width:0.9px;">Access</div>
<div class="t" style="left:196.75px;top:1205.30px;font-size:23.52px;line-height:35px;letter-spacing:-0.682px;-webkit-text-stroke-width:0.9px;">5XX</div>
<div class="t" style="left:248.25px;top:1205.30px;font-size:23.52px;line-height:35px;letter-spacing:0.355px;-webkit-text-stroke-width:0.9px;">Logs</div>
<div class="t" style="left:308.35px;top:1205.30px;font-size:23.52px;line-height:35px;letter-spacing:-0.233px;-webkit-text-stroke-width:0.9px;">(max</div>
<div class="t" style="left:367.75px;top:1205.30px;font-size:23.52px;line-height:35px;letter-spacing:-0.078px;-webkit-text-stroke-width:0.9px;">100)</div>
<div class="t m" style="left:141.03px;top:1263.00px;font-size:21.4px;line-height:32px;color:#8e8e9c;letter-spacing:0.809px;-webkit-text-stroke-width:0.45px;">2026-02-02 17:31:51.350</div>
<div class="t m" style="left:475.75px;top:1263.00px;font-size:21.4px;line-height:32px;color:#9fd8a1;letter-spacing:0.809px;-webkit-text-stroke-width:0.9px;">INFO</div>
<div class="t m" style="left:549.23px;top:1263.00px;font-size:21.4px;line-height:32px;letter-spacing:0.809px;-webkit-text-stroke-width:0.45px;width:2550.2px;overflow:hidden;">st-106902-1539756 - st-106902-1539756 - 1c91352a041fd3cbadb79a0b8c4276bb - two.inline.test - 10.208.34.185 - 502 - <span style="color:#7a90e2">GET</span> - 10.205.5.43:443 - 502 - /api/v1/orders/recent</div>
<div class="t m" style="left:141.03px;top:1307.83px;font-size:21.4px;line-height:32px;color:#8e8e9c;letter-spacing:0.809px;-webkit-text-stroke-width:0.45px;">2026-02-02 17:31:51.343</div>
<div class="t m" style="left:475.75px;top:1307.83px;font-size:21.4px;line-height:32px;color:#9fd8a1;letter-spacing:0.809px;-webkit-text-stroke-width:0.9px;">INFO</div>
<div class="t m" style="left:549.23px;top:1307.83px;font-size:21.4px;line-height:32px;letter-spacing:0.809px;-webkit-text-stroke-width:0.45px;width:2550.2px;overflow:hidden;">st-106902-1539756 - st-106902-1539756 - eb01482c90acfadce7bf195a34d1c733 - one.inline.test - 10.208.34.185 - 502 - <span style="color:#7a90e2">GET</span> -  -  - /api/v1/health</div>
<div class="t m" style="left:141.03px;top:1352.66px;font-size:21.4px;line-height:32px;color:#8e8e9c;letter-spacing:0.809px;-webkit-text-stroke-width:0.45px;">2026-02-02 17:31:51.336</div>
<div class="t m" style="left:475.75px;top:1352.66px;font-size:21.4px;line-height:32px;color:#9fd8a1;letter-spacing:0.809px;-webkit-text-stroke-width:0.9px;">INFO</div>
<div class="t m" style="left:549.23px;top:1352.66px;font-size:21.4px;line-height:32px;letter-spacing:0.809px;-webkit-text-stroke-width:0.45px;width:2550.2px;overflow:hidden;">st-106902-1539756 - st-106902-1539756 - 8b6b497505b50d42194c3654a79416ed - one.inline.test - 10.208.34.185 - 502 - <span style="color:#7a90e2">GET</span> -  -  - /api/v1/notifications/unread</div>
<div class="t m" style="left:92.62px;top:1397.49px;font-size:21.4px;line-height:32px;letter-spacing:0.809px;-webkit-text-stroke-width:0.45px;">2x</div>
<div class="t m" style="left:141.03px;top:1397.49px;font-size:21.4px;line-height:32px;color:#8e8e9c;letter-spacing:0.809px;-webkit-text-stroke-width:0.45px;">2026-02-02 17:31:51.323</div>
<div class="t m" style="left:475.75px;top:1397.49px;font-size:21.4px;line-height:32px;color:#9fd8a1;letter-spacing:0.809px;-webkit-text-stroke-width:0.9px;">INFO</div>
<div class="t m" style="left:549.23px;top:1397.49px;font-size:21.4px;line-height:32px;letter-spacing:0.809px;-webkit-text-stroke-width:0.45px;width:2550.2px;overflow:hidden;">st-106902-1539756 - st-106902-1539756 - eeac4243d6688e208cd722ef96316f9e - one.inline.test - 10.208.34.185 - 502 - <span style="color:#7a90e2">GET</span> - 10.205.5.43:443 - 502 - /api/v1/users/{id}</div>
<div class="t m" style="left:141.03px;top:1442.32px;font-size:21.4px;line-height:32px;color:#8e8e9c;letter-spacing:0.809px;-webkit-text-stroke-width:0.45px;">2026-02-02 17:31:51.314</div>
<div class="t m" style="left:475.75px;top:1442.32px;font-size:21.4px;line-height:32px;color:#9fd8a1;letter-spacing:0.809px;-webkit-text-stroke-width:0.9px;">INFO</div>
<div class="t m" style="left:549.23px;top:1442.32px;font-size:21.4px;line-height:32px;letter-spacing:0.809px;-webkit-text-stroke-width:0.45px;width:2550.2px;overflow:hidden;">st-106902-1539756 - st-106902-1539756 - dd54d83667cdfc2202ab09fefa10a591 - two.inline.test - 10.208.34.185 - 502 - <span style="color:#7a90e2">GET</span> -  -  - /api/v1/products/list</div>
<div class="t m" style="left:141.03px;top:1487.15px;font-size:21.4px;line-height:32px;color:#8e8e9c;letter-spacing:0.809px;-webkit-text-stroke-width:0.45px;">2026-02-02 17:31:51.309</div>
<div class="t m" style="left:475.75px;top:1487.15px;font-size:21.4px;line-height:32px;color:#9fd8a1;letter-spacing:0.809px;-webkit-text-stroke-width:0.9px;">INFO</div>
<div class="t m" style="left:549.23px;top:1487.15px;font-size:21.4px;line-height:32px;letter-spacing:0.809px;-webkit-text-stroke-width:0.45px;width:2550.2px;overflow:hidden;">st-106902-1539756 - st-106902-1539756 - 0657ff1c59ddabb3f20f9096eb75ff2f - www.inline.test - 10.208.34.185 - 502 - <span style="color:#7a90e2">GET</span> - 10.205.5.43:443 - 502 - /api/v1/products/{id}</div>
<div class="t m" style="left:141.03px;top:1531.98px;font-size:21.4px;line-height:32px;color:#8e8e9c;letter-spacing:0.809px;-webkit-text-stroke-width:0.45px;">2026-02-02 17:31:51.301</div>
<div class="t m" style="left:475.75px;top:1531.98px;font-size:21.4px;line-height:32px;color:#9fd8a1;letter-spacing:0.809px;-webkit-text-stroke-width:0.9px;">INFO</div>
<div class="t m" style="left:549.23px;top:1531.98px;font-size:21.4px;line-height:32px;letter-spacing:0.809px;-webkit-text-stroke-width:0.45px;width:2550.2px;overflow:hidden;">st-106902-1539756 - st-106902-1539756 - c004f8c733a42ebf8bcf9fcdb4b11252 - www.inline.test - 10.208.34.185 - 502 - <span style="color:#7a90e2">GET</span> -  -  - /api/v1/categories/all</div>
</div>
</body></html>
